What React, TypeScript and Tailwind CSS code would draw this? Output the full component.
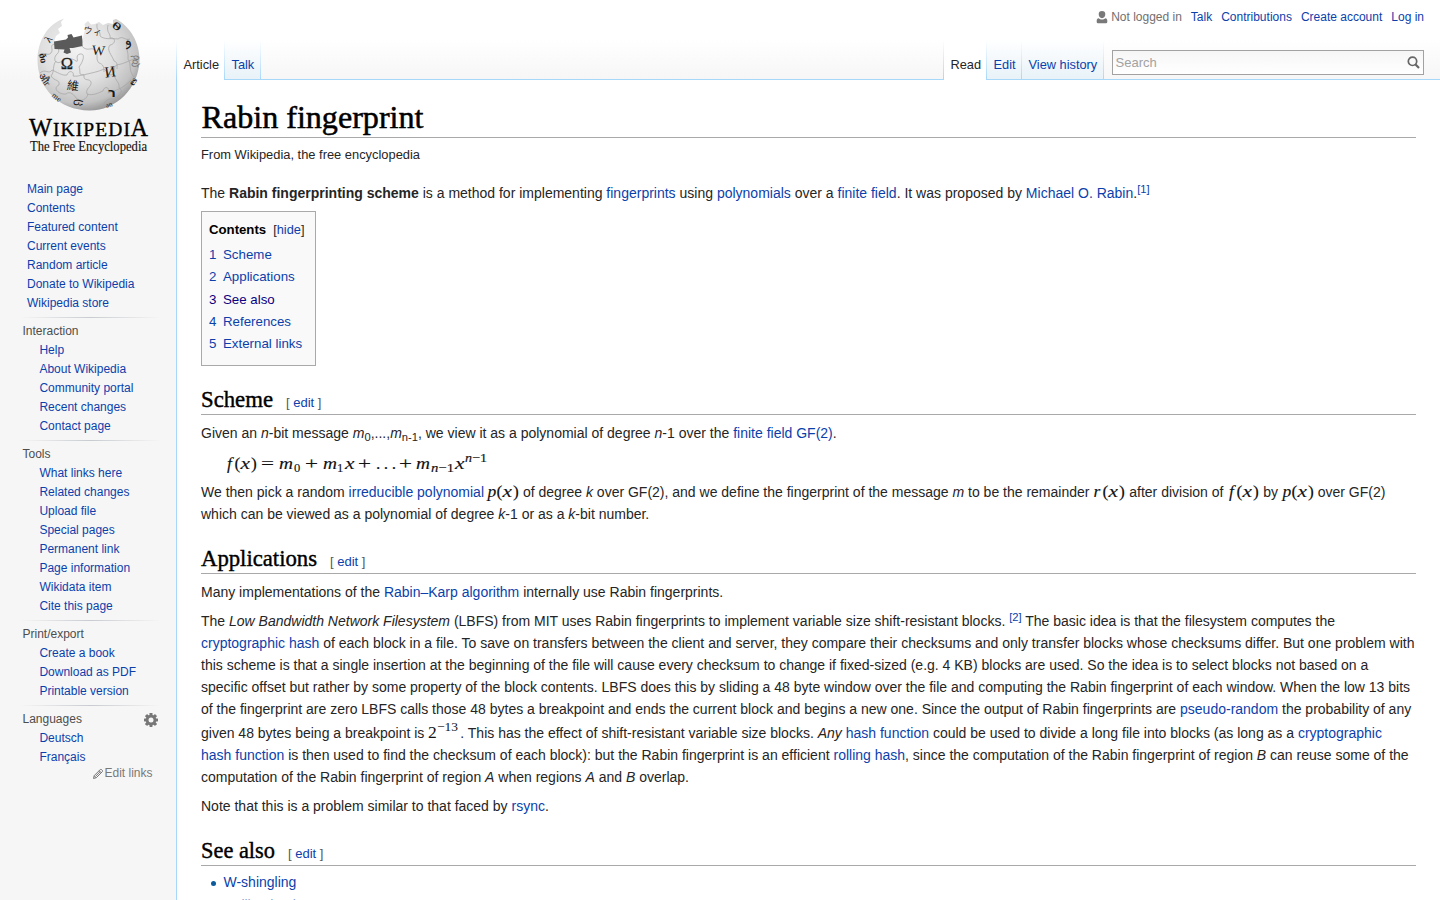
import type { ReactNode } from "react";

const A = ({ children }: { children: ReactNode }) => (
  <a className="text-[#0b3fab]">{children}</a>
);

const Line = ({ children }: { children: ReactNode }) => (
  <div className="h-[22px] whitespace-nowrap text-[14px] leading-[22px]">
    {children}
  </div>
);

const Sup = ({ children }: { children: ReactNode }) => (
  <span className="relative -top-[5px] text-[11.2px] leading-none text-[#0b3fab]">{children}</span>
);

const Sub = ({ children }: { children: ReactNode }) => (
  <span className="relative top-[3px] text-[11.2px] leading-none">{children}</span>
);

const Fn = ({ name }: { name: string }) => (
  <svg width="32" height="20" viewBox="0 0 32 20" className="inline-block overflow-visible align-[-6px]" fontSize="17.5" fontFamily="Liberation Serif, serif" fill="#111" stroke="#111" strokeWidth="0.15">
    <text x={name === "f" ? 2 : 0.5} y="14" fontStyle="italic">{name}</text>
    <text x="9.5" y="14">(</text>
    <text x="15.5" y="14" fontStyle="italic" textLength="9.5" lengthAdjust="spacingAndGlyphs">x</text>
    <text x="26" y="14">)</text>
  </svg>
);

const Heading = ({ title, width, boxClass }: { title: string; width: number; boxClass: string }) => (
  <h2 className={`flex items-end border-b border-[#a9a9a9] ${boxClass}`}>
    <svg width={width} height="28" viewBox={`0 0 ${width} 28`} className="overflow-visible">
      <text x="0" y="21" fontSize="22.5" textLength={width} lengthAdjust="spacingAndGlyphs" fontFamily="Liberation Serif, serif" fill="#000" stroke="#000" strokeWidth="0.4">
        {title}
      </text>
    </svg>
    <span className="mb-[1px] ml-[13px] text-[13px] leading-[20px] whitespace-nowrap text-[#555]">
      [ <A>edit</A> ]
    </span>
  </h2>
);

const Sep = () => <div className="h-10 w-px bg-linear-to-b from-white to-[#a7d7f9]" />;

const Tab = ({ children, active, w }: { children: ReactNode; active?: boolean; w: string }) => (
  <div
    className={`h-10 pt-[16px] pl-[6.500px] text-[12.800px] leading-[18px] whitespace-nowrap ${w} ${
      active
        ? "bg-white text-[#252525]"
        : "border-b border-[#a7d7f9] bg-linear-to-b from-white to-[#e8f2f8] text-[#0b3fab]"
    }`}
  >
    {children}
  </div>
);

const portals = [
  { title: "Interaction", items: ["Help", "About Wikipedia", "Community portal", "Recent changes", "Contact page"] },
  {
    title: "Tools",
    items: ["What links here", "Related changes", "Upload file", "Special pages", "Permanent link", "Page information", "Wikidata item", "Cite this page"],
  },
  { title: "Print/export", items: ["Create a book", "Download as PDF", "Printable version"] },
  { title: "Languages", items: ["Deutsch", "Français"] },
];

const Gear = () => (
  <svg width="14" height="14" viewBox="-7 -7 14 14">
    <g fill="#777">
      {[0, 45, 90, 135].map((a) => (
        <rect key={a} x="-1.5" y="-7" width="3" height="14" rx="0.4" transform={`rotate(${a})`} />
      ))}
      <circle r="5.3" />
    </g>
    <circle r="2.5" fill="#f6f6f6" />
  </svg>
);

const Logo = () => (
  <svg width="176" height="160" viewBox="0 0 176 160">
    <defs>
      <radialGradient id="globe" cx="0.4" cy="0.35" r="0.68">
        <stop offset="0" stopColor="#f2f2f2" />
        <stop offset="0.5" stopColor="#e0e0e0" />
        <stop offset="0.82" stopColor="#c2c2c2" />
        <stop offset="1" stopColor="#8c8c8c" />
      </radialGradient>
      <clipPath id="ball">
        <path d="M64 18.500 L61 22 L62 26 L58 29 L60 33 L56 36 L54 42 L66 44 L82 42 L84 33 L85.500 29 L84.500 24 L88 21 L91 24.500 L95 24 L99 22 L103 25 L108 23 L113 24 L113 20 L116 19 C131 27 139.500 43 139.500 60 C139 88 116 111 89 110.500 C60 110 37 89 37.500 59 C38 40 48 24 64 18.500Z" />
      </clipPath>
    </defs>
    <g clipPath="url(#ball)">
      <rect x="36" y="16" width="106" height="96" fill="url(#globe)" />
      <g fill="none" stroke="#a3a3a3" strokeWidth="0.7">
        <path d="M38 56 C44 50 47 57 51 53 C54 49 49 46 54 44 M54 44 C60 48 60 52 56 55 C52 61 58 65 62 61 C67 58 72 58 76 61 C80 63 74 55 80 54 C86 53 83 62 79 67 C81 71 78 75 83 75 C91 73 98 72 104 69 C108 72 108 77 113 74 C117 71 112 67 117 65 C124 64 132 59 140 57" />
        <path d="M40 73 C45 68 49 75 52 70 C57 72 62 76 67 75 C69 69 75 72 73 76 C79 77 82 74 84 75 C83 82 90 78 91 82 C92 87 85 88 87 94 C93 96 98 93 103 91 C105 84 111 89 108 93 C115 91 124 88 131 80" />
        <path d="M82 36 C84 42 79 45 84 48 C89 51 91 47 95 50 C99 54 95 59 99 63 C103 64 104 67 104 72 M108 25 C106 33 111 33 110 38 C116 37 116 44 110 45 C106 50 112 55 114 61 C118 62 117 66 117 69" />
        <path d="M56 61 C52 66 55 71 51 76 C55 82 60 79 59 85 C52 88 59 95 66 94 C70 90 75 96 76 98 C81 103 87 99 88 94 M114 74 C115 81 120 82 119 88 C124 90 120 96 114 99 C107 98 103 102 103 109" />
        <path d="M97 24 C96 31 101 31 100 36 C105 40 110 38 118 39 C123 35 125 41 130 39 M128 39 C124 46 129 51 128 59 C132 65 128 70 134 77" />
      </g>
    </g>
    <path d="M54 41.500 L66 39.500 L68 37.500 L67.500 35 L71.500 34 L73.500 37.500 L82 35.500 L82.500 46 L73 48 L69.500 48 L71 52.500 L67 54 L63.500 52.500 L64.500 49.500 L54.500 49 Z" fill="#5a5a5a" />
    <g fill="#1a1a1a" fontFamily="Liberation Serif, serif" textAnchor="middle">
      <text x="67" y="68.500" fontSize="16.500" stroke="#1a1a1a" strokeWidth="0.3">Ω</text>
      <text x="98.500" y="55" fontSize="14" transform="rotate(5 98 50)">W</text>
      <text x="110" y="77" fontSize="15.500" transform="rotate(-8 110 72)">И</text>
      <text x="73" y="90" fontSize="12" fontFamily="Noto Sans CJK TC, sans-serif" transform="rotate(7 73 85)">維</text>
      <text x="93" y="34" fontSize="9" transform="rotate(12 93 30)">ウィ</text>
      <text x="112" y="97" fontSize="13" fontFamily="DejaVu Sans, sans-serif" fontWeight="bold">ר</text>
      <text x="128" y="45" fontSize="14" fontFamily="DejaVu Sans, sans-serif" transform="rotate(-20 128 42)">و</text>
      <text x="44" y="62" fontSize="10" fontWeight="bold" transform="rotate(78 44 58)">ðo</text>
      <text x="48" y="43" fontSize="11" transform="rotate(-55 48 39)">λ</text>
      <text x="45" y="83" fontSize="10" transform="rotate(55 45 79)">औr</text>
      <text x="134" y="65" fontSize="10" fill="#777" transform="rotate(-70 134 61)">დბ</text>
      <text x="117" y="30" fontSize="11" fontWeight="bold" transform="rotate(35 117 26)">Ѳ</text>
      <text x="80" y="107" fontSize="12" transform="rotate(100 80 103)">ც</text>
      <text x="132" y="85" fontSize="9" fontWeight="bold" transform="rotate(-55 132 81)">es</text>
      <text x="57" y="100" fontSize="8" transform="rotate(38 57 97)">me</text>
      <text x="109" y="107" fontSize="7" transform="rotate(-18 109 105)">an</text>
    </g>
    <g fontFamily="Liberation Serif, serif" fill="#000" stroke="#000" strokeWidth="0.35">
      <text x="29" y="136" textLength="23" lengthAdjust="spacingAndGlyphs" fontSize="26">W</text>
      <text x="53" y="136" textLength="77" lengthAdjust="spacing" fontSize="19.500">IKIPEDI</text>
      <text x="130.500" y="136" textLength="17.500" lengthAdjust="spacingAndGlyphs" fontSize="26">A</text>
    </g>
    <text x="30" y="150.500" fontFamily="Liberation Serif, serif" fill="#111" stroke="#222" strokeWidth="0.15" textLength="117" lengthAdjust="spacingAndGlyphs" fontSize="14">
      The Free Encyclopedia
    </text>
  </svg>
);

const toc = ["Scheme", "Applications", "See also", "References", "External links"];

export default function App() {
  return (
    <div className="flex h-[900px] w-[1440px] overflow-hidden bg-[#f6f6f6] bg-[linear-gradient(to_bottom,#fff_50%,#f6f6f6_100%)] bg-[length:100%_80px] bg-no-repeat font-['Liberation_Sans',Arial,sans-serif] text-[#252525]">
      <aside className="w-[176px] shrink-0 text-[12px] leading-[19px] whitespace-nowrap">
        <Logo />
        <nav className="mt-[20px] pl-[27px] text-[#0b3fab]">
          {["Main page", "Contents", "Featured content", "Current events", "Random article", "Donate to Wikipedia", "Wikipedia store"].map((t) => (
            <div key={t}>{t}</div>
          ))}
        </nav>
        {portals.map((p, i) => (
          <section key={p.title} className="mt-[4px]">
            <div className="ml-[20px] h-px w-[141px] bg-linear-to-r from-[#f6f6f6] via-[#c8ccd1] to-[#f6f6f6]" />
            <div className="mt-[4px] flex h-[19px] items-center justify-between pr-[18px] pl-[22.500px] text-[#4d4d4d]">
              {p.title}
              {i === 3 && <Gear />}
            </div>
            <div className="pl-[39.400px] text-[#0b3fab]">
              {p.items.map((t) => (
                <div key={t}>{t}</div>
              ))}
            </div>
          </section>
        ))}
        <div className="-mt-[3px] flex items-center pl-[92px] text-[#797979]">
          <svg width="12" height="12" viewBox="0 0 12 12" fill="none" stroke="#777" strokeWidth="1">
            <path d="M1.500 10.500 L2.200 7.600 L8.300 1.600 Q9 1 9.700 1.700 L10.300 2.300 Q11 3 10.300 3.700 L4.300 9.700 Z M7.200 2.800 L9.200 4.800 M2.200 7.800 L4.200 9.800 M3.600 8.300 L8.200 3.700" />
          </svg>
          <span className="ml-[0.500px]">Edit links</span>
        </div>
      </aside>

      <div className="flex h-[900px] shrink-0 flex-col">
        <div className="h-10 w-px" />
        <Sep />
        <div className="w-px flex-1 bg-[#a7d7f9]" />
      </div>

      <div className="flex w-[1263px] flex-col">
        <div className="flex h-10 items-start justify-end pt-[8px] pr-[16px] text-[12px] leading-[18px] whitespace-nowrap text-[#0b3fab]">
          <svg width="12" height="14" viewBox="0 0 12 14" className="mt-[2px] mr-[3px]" fill="#797979">
            <path d="M6 1a3.300 3.300 0 0 1 3.300 3.300C9.300 6.600 8 8.200 6 8.200S2.700 6.600 2.700 4.300A3.300 3.300 0 0 1 6 1Z" />
            <path d="M2.600 8.200C4.500 10 7.500 10 9.400 8.200C10.800 8.500 11.300 9.400 11.300 10.700V12Q11.300 13.300 10 13.300H2Q0.700 13.300 0.700 12V10.700C0.700 9.400 1.200 8.500 2.600 8.200Z" />
          </svg>
          <span className="mr-[9px] text-[#707070]">Not logged in</span>
          <span className="mr-[9px]">Talk</span>
          <span className="mr-[9px]">Contributions</span>
          <span className="mr-[9px]">Create account</span>
          <span>Log in</span>
        </div>
        <div className="flex h-10">
          <Tab active w="w-[47px]">Article</Tab>
          <Sep />
          <Tab w="w-[35px]">Talk</Tab>
          <Sep />
          <div className="w-[682px] border-b border-[#a7d7f9]" />
          <Sep />
          <Tab active w="w-[42px]">Read</Tab>
          <Sep />
          <Tab w="w-[34px]">Edit</Tab>
          <Sep />
          <Tab w="w-[81px]">View history</Tab>
          <Sep />
          <div className="flex-1 border-b border-[#a7d7f9] pt-[10px] pl-[8px]">
            <div className="flex h-[25px] w-[312px] items-center justify-between border border-[#a2a2a2] bg-linear-to-b from-[#f6f6f6] to-white pr-[3px] pl-[2.500px] text-[13px] text-[#a2a2a2]">
              Search
              <svg width="13" height="13" viewBox="0 0 13 13" fill="none" stroke="#666">
                <circle cx="5.500" cy="5.300" r="4.200" strokeWidth="1.700" />
                <path d="M8.300 8.300 L12 12" strokeWidth="2.200" />
              </svg>
            </div>
          </div>
        </div>

        <main className="flex h-[820px] flex-col overflow-hidden bg-white pr-[24px] pl-[24px]">
          <h1 className="h-[58px] shrink-0 border-b border-[#a9a9a9]">
            <svg width="224" height="57" viewBox="0 0 224 57" className="overflow-visible">
              <text x="0.500" y="48" fontSize="31" textLength="222" lengthAdjust="spacingAndGlyphs" fontFamily="Liberation Serif, serif" fill="#000" stroke="#000" strokeWidth="0.5">
                Rabin fingerprint
              </text>
            </svg>
          </h1>
          <div className="mt-[6px] h-[21px] shrink-0 text-[12.880px] leading-[21px]">From Wikipedia, the free encyclopedia</div>
          <div className="mt-[17px]">
            <Line>
              The <b>Rabin fingerprinting scheme</b> is a method for implementing <A>fingerprints</A> using <A>polynomials</A> over a <A>finite field</A>. It was proposed by <A>Michael O. Rabin</A>.<Sup>[1]</Sup>
            </Line>
          </div>
          <div className="mt-[7px] h-[155px] w-[115px] shrink-0 border border-[#a9a9a9] bg-[#f9f9f9] pt-[7px] pl-[7px] text-[13.300px] whitespace-nowrap">
            <div className="flex h-[22px] items-center text-[13.200px]">
              <b className="text-black">Contents</b>
              <span className="ml-[7px] text-[12.800px]">[<A>hide</A>]</span>
            </div>
            <div className="mt-[3px]">
              {toc.map((t, i) => (
                <div key={t} className={`flex h-[22.300px] items-center ${i === 2 ? "text-[#0b0080]" : "text-[#0b3fab]"}`}>
                  <span className="w-[14px]">{i + 1}</span>
                  {t}
                </div>
              ))}
            </div>
          </div>

          <Heading title="Scheme" width={72} boxClass="mt-[16px] h-[33px] shrink-0" />
          <div className="mt-[7px]">
            <Line>
              Given an <i>n</i>-bit message <i>m</i><Sub>0</Sub>,...,<i>m</i><Sub>n-1</Sub>, we view it as a polynomial of degree <i>n</i>-1 over the <A>finite field</A> <A>GF(2)</A>.
            </Line>
          </div>
          <div className="h-[37px] shrink-0 pl-[24px]">
            <svg width="264" height="37" viewBox="0 0 264 37" className="overflow-visible" fontFamily="Liberation Serif, serif" fontSize="17.500" fill="#111" stroke="#111" strokeWidth="0.15">
              <text x="2" y="25" fontStyle="italic">f</text>
              <text x="9.500" y="25">(</text>
              <text x="15.500" y="25" fontStyle="italic" textLength="9.500" lengthAdjust="spacingAndGlyphs">x</text>
              <text x="26" y="25">)</text>
              <text x="36" y="25" textLength="13" lengthAdjust="spacingAndGlyphs">=</text>
              <text x="54" y="25" fontStyle="italic" textLength="14" lengthAdjust="spacingAndGlyphs">m</text>
              <text x="69" y="27.500" fontSize="12.500">0</text>
              <text x="80" y="25" textLength="13" lengthAdjust="spacingAndGlyphs">+</text>
              <text x="98" y="25" fontStyle="italic" textLength="14" lengthAdjust="spacingAndGlyphs">m</text>
              <text x="112" y="27.500" fontSize="12.500">1</text>
              <text x="120" y="25" fontStyle="italic" textLength="9.500" lengthAdjust="spacingAndGlyphs">x</text>
              <text x="133" y="25" textLength="13" lengthAdjust="spacingAndGlyphs">+</text>
              <text x="151" y="25" textLength="20">...</text>
              <text x="174" y="25" textLength="13" lengthAdjust="spacingAndGlyphs">+</text>
              <text x="191" y="25" fontStyle="italic" textLength="14" lengthAdjust="spacingAndGlyphs">m</text>
              <text x="206" y="27.500" fontSize="12.500" textLength="23" lengthAdjust="spacingAndGlyphs"><tspan fontStyle="italic">n</tspan>−1</text>
              <text x="230" y="25" fontStyle="italic" textLength="9.500" lengthAdjust="spacingAndGlyphs">x</text>
              <text x="240" y="18" fontSize="12.500" textLength="22" lengthAdjust="spacingAndGlyphs"><tspan fontStyle="italic">n</tspan>−1</text>
            </svg>
          </div>
          <div>
            <Line>
              We then pick a random <A>irreducible polynomial</A><span className="inline-block w-[3px]" /><Fn name="p" /> of degree <i>k</i> over GF(2), and we define the fingerprint of the message <i>m</i> to be the remainder <Fn name="r" /> after division of <Fn name="f" /> by <Fn name="p" /> over GF(2)
            </Line>
            <Line>
              which can be viewed as a polynomial of degree <i>k</i>-1 or as a <i>k</i>-bit number.
            </Line>
          </div>

          <Heading title="Applications" width={116} boxClass="mt-[16px] h-[33px] shrink-0" />
          <div className="mt-[7px]">
            <Line>
              Many implementations of the <A>Rabin–Karp algorithm</A> internally use Rabin fingerprints.
            </Line>
          </div>
          <div className="mt-[7px]">
            <Line>
              The <i>Low Bandwidth Network Filesystem</i> (LBFS) from MIT uses Rabin fingerprints to implement variable size shift-resistant blocks. <Sup>[2]</Sup> The basic idea is that the filesystem computes the
            </Line>
            <Line>
              <A>cryptographic hash</A> of each block in a file. To save on transfers between the client and server, they compare their checksums and only transfer blocks whose checksums differ. But one problem with
            </Line>
            <Line>
              this scheme is that a single insertion at the beginning of the file will cause every checksum to change if fixed-sized (e.g. 4 KB) blocks are used. So the idea is to select blocks not based on a
            </Line>
            <Line>
              specific offset but rather by some property of the block contents. LBFS does this by sliding a 48 byte window over the file and computing the Rabin fingerprint of each window. When the low 13 bits
            </Line>
            <Line>
              of the fingerprint are zero LBFS calls those 48 bytes a breakpoint and ends the current block and begins a new one. Since the output of Rabin fingerprints are <A>pseudo-random</A> the probability of any
            </Line>
            <div className="h-[2px]" />
            <Line>
              given 48 bytes being a breakpoint is{" "}
              <svg width="32" height="20" viewBox="0 0 32 20" className="inline-block overflow-visible align-[-6px]" fontFamily="Liberation Serif, serif" fill="#111">
                <text x="0" y="14" fontSize="17.500">2</text>
                <text x="9" y="7" fontSize="12.500" textLength="21" lengthAdjust="spacingAndGlyphs">−13</text>
              </svg>
              . This has the effect of shift-resistant variable size blocks. <i>Any</i> <A>hash function</A> could be used to divide a long file into blocks (as long as a <A>cryptographic</A>
            </Line>
            <Line>
              <A>hash function</A> is then used to find the checksum of each block): but the Rabin fingerprint is an efficient <A>rolling hash</A>, since the computation of the Rabin fingerprint of region <i>B</i> can reuse some of the
            </Line>
            <Line>
              computation of the Rabin fingerprint of region <i>A</i> when regions <i>A</i> and <i>B</i> overlap.
            </Line>
          </div>
          <div className="mt-[7px]">
            <Line>
              Note that this is a problem similar to that faced by <A>rsync</A>.
            </Line>
          </div>

          <Heading title="See also" width={74} boxClass="mt-[16px] h-[33px] shrink-0" />
          <ul className="mt-[5px] shrink-0">
            {["W-shingling", "Rolling hash"].map((t, i) => (
              <li key={t} className={`flex h-[22px] items-center pl-[10px] text-[14px] leading-[22px] text-[#0b3fab] ${i === 1 ? "mt-[0.500px] opacity-50" : ""}`}>
                <span className="mt-[3px] mr-[7.500px] size-[5px] rounded-full bg-[#0a5a9c]" />
                {t}
              </li>
            ))}
          </ul>
        </main>
      </div>
    </div>
  );
}
